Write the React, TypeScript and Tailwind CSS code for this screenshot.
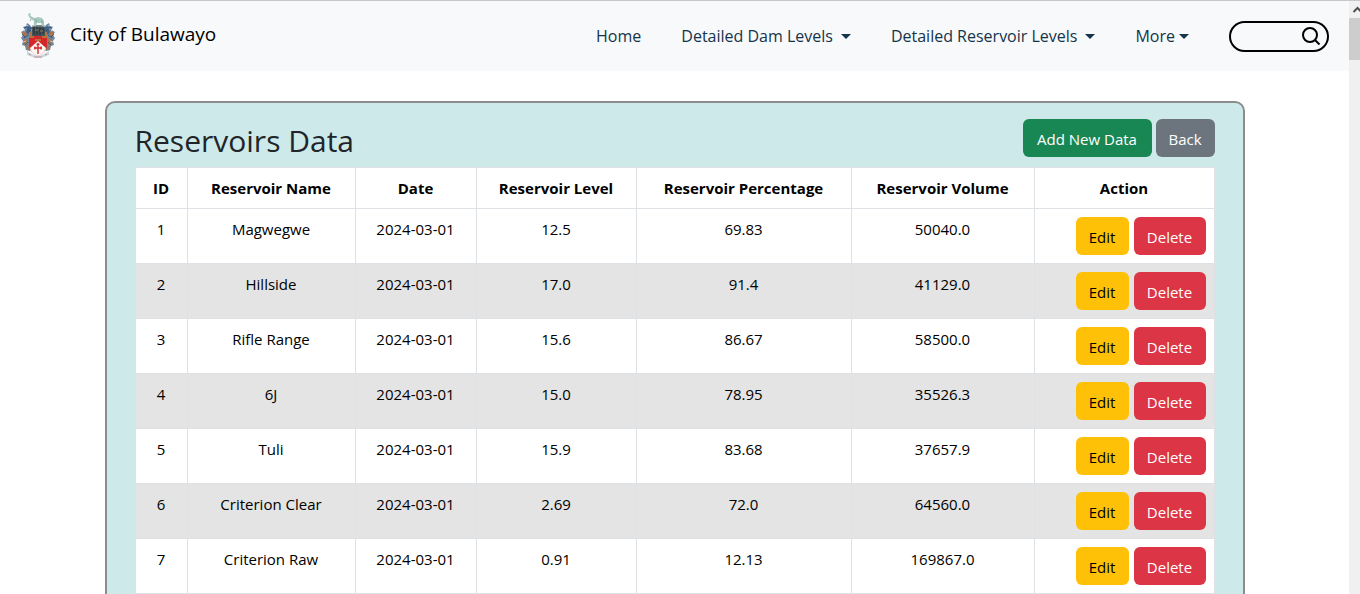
import React from "react";

type Reservoir = {
  id: number;
  name: string;
  date: string;
  level: string;
  percentage: string;
  volume: string;
};

const reservoirs: Reservoir[] = [
  { id: 1, name: "Magwegwe", date: "2024-03-01", level: "12.5", percentage: "69.83", volume: "50040.0" },
  { id: 2, name: "Hillside", date: "2024-03-01", level: "17.0", percentage: "91.4", volume: "41129.0" },
  { id: 3, name: "Rifle Range", date: "2024-03-01", level: "15.6", percentage: "86.67", volume: "58500.0" },
  { id: 4, name: "6J", date: "2024-03-01", level: "15.0", percentage: "78.95", volume: "35526.3" },
  { id: 5, name: "Tuli", date: "2024-03-01", level: "15.9", percentage: "83.68", volume: "37657.9" },
  { id: 6, name: "Criterion Clear", date: "2024-03-01", level: "2.69", percentage: "72.0", volume: "64560.0" },
  { id: 7, name: "Criterion Raw", date: "2024-03-01", level: "0.91", percentage: "12.13", volume: "169867.0" },
];

const columns = [
  { label: "ID", width: "w-[52px]" },
  { label: "Reservoir Name", width: "w-[168px]" },
  { label: "Date", width: "w-[121px]" },
  { label: "Reservoir Level", width: "w-[160px]" },
  { label: "Reservoir Percentage", width: "w-[215px]" },
  { label: "Reservoir Volume", width: "w-[183px]" },
  { label: "Action", width: "" },
];

function Crest() {
  return (
    <svg width="36" height="46" viewBox="0 0 36 46" aria-hidden="true" className="shrink-0">
      {/* mantling */}
      <path d="M10 12 L7 10 L6 13 L3 14 L5 17 L1 19 L3 22 L1 25 L3 28 L2 32 L5 33 L6 37 L10 38 L12 34 L11 14 Z" fill="#6a88a5" />
      <path d="M26 12 L29 10 L30 13 L33 14 L31 17 L35 19 L33 22 L35 25 L33 28 L34 32 L31 33 L30 37 L26 38 L24 34 L25 14 Z" fill="#6a88a5" />
      <path d="M7 13 L12 14 L11 22 L5 20 L7 17 Z M29 13 L24 14 L25 22 L31 20 L29 17 Z" fill="#3f6288" />
      <path d="M2 19 L6 18 L7 22 L3 24 Z M3 27 L8 25 L8 32 L4 31 Z M6 34 L9 32 L11 37 L8 37 Z M9 19 L12 18 L12 23 L9 23 Z" fill="#a9754f" />
      <path d="M34 19 L30 18 L29 22 L33 24 Z M33 27 L28 25 L28 32 L32 31 Z M30 34 L27 32 L25 37 L28 37 Z M27 19 L24 18 L24 23 L27 23 Z" fill="#a9754f" />
      <path d="M4 15 L7 14 M2 21 L5 24 M4 25 L8 22 M5 32 L8 29 M8 16 L10 19 M32 15 L29 14 M34 21 L31 24 M32 25 L28 22 M31 32 L28 29 M28 16 L26 19" stroke="#34526f" strokeWidth="0.9" fill="none" />
      <path d="M6 12 L8 13 M3 17 L5 18 M3 29 L6 28 M30 12 L28 13 M33 17 L31 18 M33 29 L30 28" stroke="#b8c9d8" strokeWidth="1" fill="none" />
      {/* helmet */}
      <path d="M12 14 L15 12 L23 12 L25 15 L25 24 L12 24 Z" fill="#46535b" />
      <path d="M14 14 V22 M17 13 V22 M20 13 V22 M23 15 V21" stroke="#1c2a33" strokeWidth="1" />
      <path d="M12 13 H25" stroke="#8fa0a0" strokeWidth="1.2" />
      <path d="M15 17 H18 M20 18 H23" stroke="#8b8665" strokeWidth="1" />
      {/* elephant */}
      <path d="M14 13 L14 8 L11 6 L9 4 L8 1 L10 0 L11 1 L10 2 L12 4 L15 5 L18 4 L22 5 L24 8 L24 13 L22 13 L21 10 L17 10 L16 13 Z" fill="#a5cabd" />
      <path d="M15 6 L17 8 L15 9 M22 7 L22 10 M11 6 L10 8" stroke="#7ba798" strokeWidth="0.8" fill="none" />
      {/* shield */}
      <path d="M9 23 H27 V32 Q27 39 18 43 Q9 39 9 32 Z" fill="#d5262b" />
      <path d="M18 28 L26 35 Q25 40 18 43 Q11 40 10 35 Z" fill="#fdf7f4" />
      <path d="M9 24 H14 M15 27 H21 M22 24 H27" stroke="#b68832" strokeWidth="1.7" />
      <path d="M18 30 V41 M14 35 H22 M16.5 31.5 H19.5 M15 33.5 V36.5 M21 33.5 V36.5" stroke="#d5262b" strokeWidth="1.4" />
      {/* motto ribbon */}
      <path d="M7 38 L10 40 Q18 46 26 40 L29 38 L29 42 L26 43 Q18 47 10 43 L7 42 Z" fill="#cbd5de" />
      <path d="M9 41 L11 42 M25 42 L27 41 M14 44 H22" stroke="#b98f88" strokeWidth="0.9" />
    </svg>
  );
}

function Caret() {
  return (
    <svg width="10" height="5" viewBox="0 0 10 5" aria-hidden="true" className="fill-[#14344a]">
      <path d="M0 0 H10 L5 5 Z" />
    </svg>
  );
}

function Header() {
  return (
    <header className="flex h-[70px] items-center justify-between bg-[#f8f9fa] px-5">
      <a href="#" className="flex items-center gap-[14px] text-[19px] text-black">
        <Crest />
        <span className="pb-1">City of Bulawayo</span>
      </a>
      <nav className="flex items-center gap-10 text-base text-[#14344a]">
        <a href="#">Home</a>
        <button type="button" className="flex items-center gap-2">
          Detailed Dam Levels <Caret />
        </button>
        <button type="button" className="flex items-center gap-2">
          Detailed Reservoir Levels <Caret />
        </button>
        <button type="button" className="flex items-center gap-1">
          More <Caret />
        </button>
        <form className="flex h-[31px] w-[100px] items-center rounded-full border-2 border-black pr-[6px] pl-3">
          <input type="text" aria-label="Search" className="w-full min-w-0 bg-transparent outline-none" />
          <button type="button" aria-label="Search" className="shrink-0">
            <svg width="20" height="20" viewBox="0 0 20 20" fill="none" stroke="#000" strokeWidth="2">
              <circle cx="9" cy="9" r="7" />
              <path d="M14 14 L18.5 18.5" />
            </svg>
          </button>
        </form>
      </nav>
    </header>
  );
}

const buttonBase = "h-[38px] rounded-md px-3 pt-[2px]";

function ReservoirTable() {
  return (
    <table className="w-full table-fixed border-collapse bg-white text-center text-black">
      <thead>
        <tr>
          {columns.map((column) => (
            <th key={column.label} scope="col" className={`${column.width} border border-[#dee2e6] p-2 font-bold`}>
              {column.label}
            </th>
          ))}
        </tr>
      </thead>
      <tbody>
        {reservoirs.map((row) => (
          <tr key={row.id} className="align-top even:bg-[#e4e4e4]">
            {[row.id, row.name, row.date, row.level, row.percentage, row.volume].map((value, index) => (
              <td key={index} className="border border-[#dee2e6] p-2">
                {value}
              </td>
            ))}
            <td className="border border-[#dee2e6] p-2">
              <div className="flex justify-end gap-[5px]">
                <button type="button" className={`${buttonBase} min-w-[53px] bg-[#ffc107] text-black`}>Edit</button>
                <button type="button" className={`${buttonBase} min-w-[72px] bg-[#dc3545] text-white`}>Delete</button>
              </div>
            </td>
          </tr>
        ))}
      </tbody>
    </table>
  );
}

function Scrollbar() {
  return (
    <div aria-hidden="true" className="flex w-[11px] shrink-0 flex-col overflow-hidden bg-[#f0f0f0]">
      <div className="flex h-[17px] shrink-0 items-center pl-1">
        <svg width="10" height="7" viewBox="0 0 10 7" fill="none" stroke="#505050" strokeWidth="2" className="shrink-0">
          <path d="M0.5 6 L4.5 2 L8.5 6" />
        </svg>
      </div>
      <div className="h-[42px] shrink-0 bg-[#cdcdcd]" />
    </div>
  );
}

export default function App() {
  return (
    <div className="flex h-screen overflow-hidden border-t border-[#c8c8cc] bg-white font-['Open_Sans','Noto_Sans',sans-serif] text-[15px] leading-6">
      <div className="min-w-0 flex-1">
        <Header />
        <main className="mx-auto mt-[30px] max-w-[1140px] rounded-[10px] border-2 border-[#8c8c8c] bg-[#cee9e9] px-7 py-4">
          <div className="mb-1 flex items-start justify-between">
            <h1 className="text-[30px] leading-[44px] text-[#212529]">Reservoirs Data</h1>
            <div className="flex gap-1">
              <button type="button" className={`${buttonBase} min-w-[129px] bg-[#198754] text-white`}>Add New Data</button>
              <button type="button" className={`${buttonBase} min-w-[59px] bg-[#6c757d] text-white`}>Back</button>
            </div>
          </div>
          <ReservoirTable />
        </main>
      </div>
      <Scrollbar />
    </div>
  );
}
